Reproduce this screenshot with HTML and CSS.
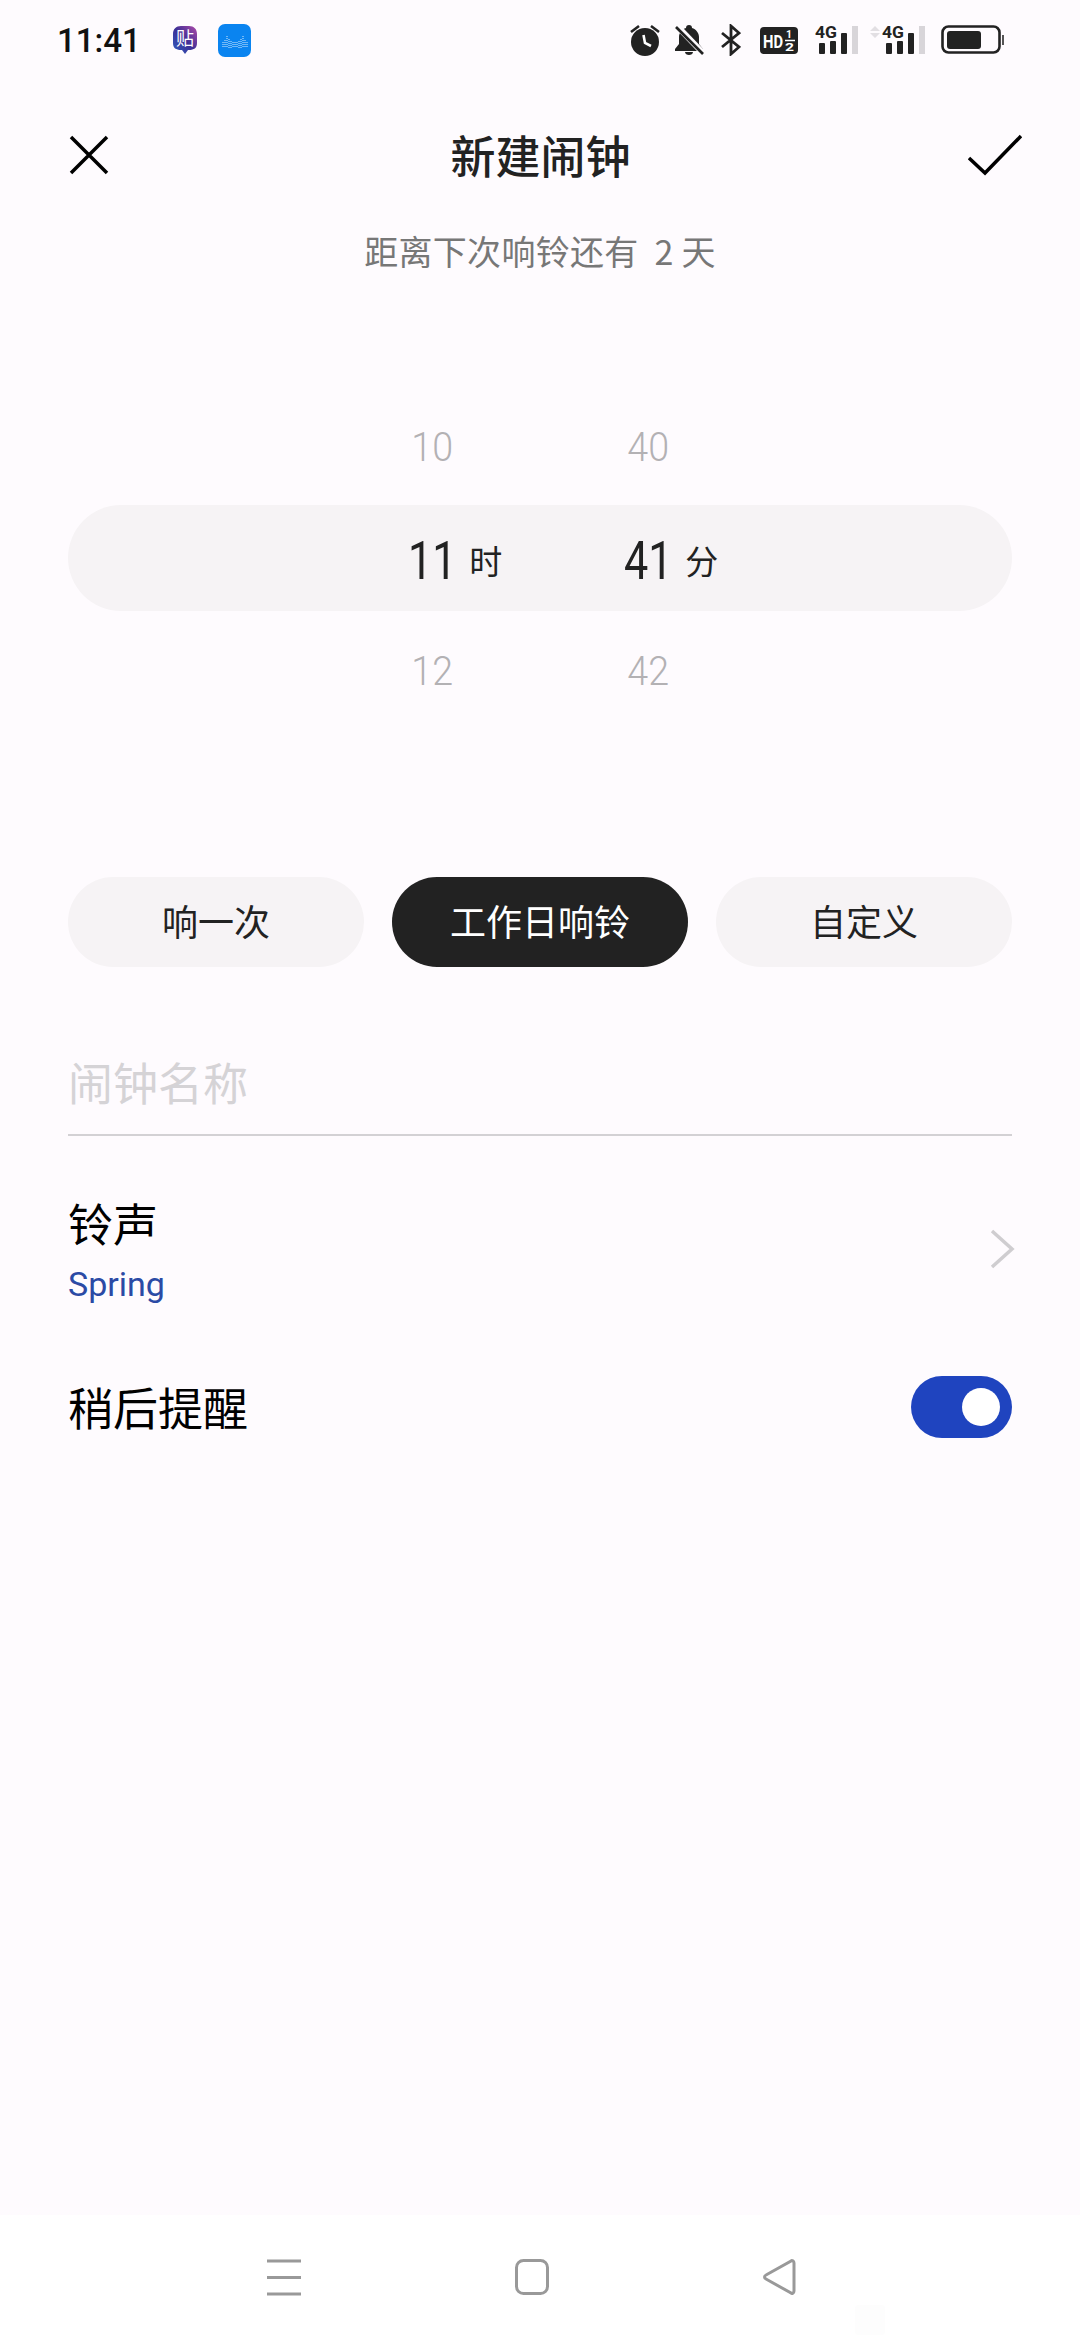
FILE: index.html
```html
<!DOCTYPE html>
<html lang="zh-CN">
<head>
<meta charset="utf-8">
<title>新建闹钟</title>
<link rel="stylesheet" href="styles.css">
</head>
<body>
<div class="app">
  <div class="status">
    <span class="time">11:41</span>
    <svg class="ic-tie" width="26" height="30" viewBox="0 0 26 30">
      <defs><linearGradient id="tg" x1="0" y1="1" x2="1" y2="0"><stop offset="0" stop-color="#2f5fc0"/><stop offset=".5" stop-color="#3c2f96"/><stop offset="1" stop-color="#b04aa8"/></linearGradient></defs>
      <path d="M9 1h8c5 0 8 3 8 8v9c0 5-3 7-8 7h-1l-3 4-3-4H9c-5 0-8-2-8-7V9c0-5 3-8 8-8z" fill="url(#tg)"/>
      <text x="13" y="20" class="tie-text" text-anchor="middle">贴</text>
    </svg>
    <svg class="ic-blue" width="33" height="33" viewBox="0 0 33 33">
      <rect width="33" height="33" rx="7" fill="#0a84f0"/>
      <path d="M5 18V24M7 16V24M9 12V24M11 15V24M13 17V24M15 18V24M17 18V24M19 18V24M21 17V24M23 15V24M25 12V24M27 16V24M29 18V24" stroke="#fff" stroke-width="1" stroke-dasharray="1 1" opacity=".85" fill="none"/>
    </svg>
    <div class="status-right">
      <svg class="si-alarm" width="30" height="32" viewBox="0 0 30 32"><circle cx="15" cy="18" r="14" fill="#222"/><path d="M1 8l8-6M29 8l-8-6" stroke="#222" stroke-width="2.6"/><path d="M13.500 11l1.500 8 6 3" stroke="#fff" stroke-width="2.6" fill="none"/></svg>
      <svg class="si-bell" width="29" height="32" viewBox="0 0 29 32"><path d="M14 1c2 0 3 1 3 3 4 1 7 5 7 9v7l4 5v2H0v-2l4-5v-7c0-4 3-8 7-9 0-2 1-3 3-3zM10 28h8c0 2-2 3-4 3s-4-1-4-3z" fill="#222"/><path d="M2 2l27 28" stroke="#fefbfe" stroke-width="6"/><path d="M1 3l27 27" stroke="#222" stroke-width="2.6"/></svg>
      <svg class="si-bt" width="20" height="32" viewBox="0 0 20 32"><path d="M1 9l17 14-8 7V2l8 7L1 23" stroke="#222" stroke-width="2.800" fill="none"/></svg>
      <svg class="si-hd" width="38" height="27" viewBox="0 0 38 27"><rect width="38" height="27" rx="4" fill="#222"/><text x="3" y="21" class="hd" textLength="20" lengthAdjust="spacingAndGlyphs">HD</text><text x="26" y="11" class="hd-s" textLength="6" lengthAdjust="spacingAndGlyphs">1</text><text x="25" y="24" class="hd-s" textLength="9" lengthAdjust="spacingAndGlyphs">2</text><path d="M25 13.500h10" stroke="#fff" stroke-width="1.500"/></svg>
      <svg class="si-sig" width="44" height="36" viewBox="0 -2 44 36"><text x="0" y="14" class="g4" textLength="22" lengthAdjust="spacingAndGlyphs">4G</text><rect x="4" y="19" width="6" height="11" rx="1" fill="#222"/><rect x="15" y="17" width="6" height="13" rx="1" fill="#222"/><rect x="26" y="9" width="6" height="21" rx="1" fill="#222"/><rect x="37" y="2" width="6" height="28" fill="#d8d5d9"/></svg>
      <svg class="si-sig2" width="58" height="36" viewBox="0 -2 58 36"><path d="M2 7l5-5 5 5zM2 9l5 5 5-5z" fill="#e2dfe3"/><text x="14" y="14" class="g4" textLength="22" lengthAdjust="spacingAndGlyphs">4G</text><rect x="18" y="19" width="6" height="11" rx="1" fill="#222"/><rect x="29" y="17" width="6" height="13" rx="1" fill="#222"/><rect x="40" y="9" width="6" height="21" rx="1" fill="#222"/><rect x="51" y="2" width="6" height="28" fill="#d8d5d9"/></svg>
      <svg class="si-batt" width="64" height="30" viewBox="0 0 64 30"><rect x="1.500" y="1.500" width="57" height="26" rx="6" fill="none" stroke="#222" stroke-width="2.6"/><rect x="6" y="6" width="34" height="18" rx="3" fill="#222"/><rect x="61" y="10" width="2" height="10" fill="#555"/></svg>
    </div>
  </div>

  <div class="header">
    <svg width="40" height="40" viewBox="0 0 40 40"><path d="M2 2l36 36M38 2L2 38" stroke="#000" stroke-width="3.500" fill="none"/></svg>
    <h1 class="title">新建闹钟</h1>
    <svg width="54" height="42" viewBox="0 0 54 42"><path d="M1 24l16 15L53 2" stroke="#000" stroke-width="3.500" fill="none"/></svg>
  </div>
  <p class="sub">距离下次响铃还有&nbsp;&nbsp;2 天</p>

  <div class="wheel">
    <div class="wheel-row dim">
      <div class="cell"><span class="num">10</span></div>
      <div class="cell"><span class="num">40</span></div>
    </div>
    <div class="wheel-row active">
      <div class="cell"><span class="num">11</span><span class="unit">时</span></div>
      <div class="cell"><span class="num">41</span><span class="unit">分</span></div>
    </div>
    <div class="wheel-row dim">
      <div class="cell"><span class="num">12</span></div>
      <div class="cell"><span class="num">42</span></div>
    </div>
  </div>

  <div class="segments">
    <div class="seg">响一次</div>
    <div class="seg on">工作日响铃</div>
    <div class="seg">自定义</div>
  </div>

  <div class="name-field">闹钟名称</div>

  <div class="row ring">
    <div>
      <div class="row-title">铃声</div>
      <div class="row-sub">Spring</div>
    </div>
    <svg class="chev" width="26" height="40" viewBox="0 0 26 40"><path d="M3 2l20 18L3 38" stroke="#cfcdd0" stroke-width="3.500" fill="none"/></svg>
  </div>

  <div class="row snooze">
    <div class="row-title">稍后提醒</div>
    <div class="toggle"><span class="knob"></span></div>
  </div>

  <div class="nav">
    <svg width="34" height="37" viewBox="0 0 34 37"><path d="M0 2h34M0 18.500h34M0 35h34" stroke="#999" stroke-width="3"/></svg>
    <svg width="34" height="36" viewBox="0 0 34 36"><rect x="1.500" y="1.500" width="31" height="33" rx="7" fill="none" stroke="#999" stroke-width="3"/></svg>
    <svg width="34" height="36" viewBox="0 0 34 36"><path d="M31 4c0-2-2-3-3-2L3 16c-2 1-2 3 0 4l25 14c1 1 3 0 3-2z" fill="none" stroke="#999" stroke-width="3"/></svg>
    <span class="ghost"></span>
  </div>
</div>
</body>
</html>
```
FILE: styles.css
```css
* { box-sizing: border-box; }
html, body { margin: 0; padding: 0; }
body {
  background: #fefbfe;
  font-family: "Noto Sans CJK SC", Roboto, sans-serif;
  color: #222;
}
.app { width: 1080px; height: 2340px; display: flex; flex-direction: column; overflow: hidden; }

.status { height: 80px; display: flex; align-items: center; padding: 0 75px 0 57px; }
.time { font: 500 33px/1 Roboto, sans-serif; color: #111; width: 80px; white-space: nowrap; }
.ic-tie { margin-left: 35px; }
.ic-blue { margin-left: 20px; }
.tie-text { font: 400 18px "Noto Sans CJK SC", sans-serif; fill: #fff; }
.status-right { margin-left: auto; display: flex; align-items: center; }
.si-bell { margin-left: 15px; }
.si-bt { margin-left: 17px; }
.si-hd { margin-left: 19px; }
.si-sig { margin-left: 17px; }
.si-sig2 { margin-left: 9px; }
.si-batt { margin-left: 15px; }
.hd { font: 700 19px Roboto, sans-serif; fill: #fff; }
.hd-s { font: 700 10px Roboto, sans-serif; fill: #fff; }
.g4 { font: 700 17px Roboto, sans-serif; fill: #222; }

.header { height: 74px; margin-top: 38px; padding: 0 58px 0 69px; display: flex; align-items: center; justify-content: space-between; }
.title { margin: 0 0 0 4px; font-size: 45px; font-weight: 500; line-height: 74px; color: #222; }
.sub { margin: 34px 0 0; text-align: center; font-size: 34px; letter-spacing: .3px; line-height: 50px; color: #777; }

.wheel { margin: 117px 68px 0; display: flex; flex-direction: column; gap: 6px; }
.wheel-row { height: 106px; padding-left: 256px; display: grid; grid-template-columns: 216px 216px; align-items: center; }
.wheel-row.active { background: #f6f3f5; border-radius: 53px; }
.cell { display: grid; grid-template-columns: 1fr auto 1fr; align-items: center; }
.num { grid-column: 2; font-family: Roboto, sans-serif; font-weight: 300; line-height: 1; }
.dim .num { font-size: 40px; color: #b3b1b4; padding-top: 4px; transform: scaleX(.94); }
.active .num { font-size: 54px; font-weight: 400; color: #222; padding-top: 5px; transform: scaleX(.8); }
.unit { grid-column: 3; font-size: 33px; line-height: 1; padding-left: 7px; padding-top: 5px; color: #222; }

.segments { margin: 154px 68px 0; display: flex; gap: 28px; }
.seg { flex: 1; height: 90px; padding-bottom: 4px; border-radius: 45px; background: #f6f3f5; display: flex; align-items: center; justify-content: center; font-size: 36px; color: #222; }
.seg.on { background: #222; color: #fff; }

.name-field { margin: 66px 68px 0; height: 103px; border-bottom: 2px solid #d3d1d4; font-size: 45px; line-height: 70px; padding-top: 14px; color: #d5d3d6; }

.row { margin: 0 68px; display: flex; align-items: center; justify-content: space-between; }
.ring { margin-top: 55px; }
.row-title { font-size: 45px; line-height: 64px; color: #000; }
.row-sub { font: 400 34px/44px Roboto, sans-serif; color: #2b4aa5; margin-top: 7px; }
.chev { margin-right: -3px; }
.snooze { margin-top: 69px; }
.toggle { width: 101px; height: 62px; border-radius: 31px; background: #1f44bf; display: flex; align-items: center; justify-content: flex-end; padding-right: 12px; }
.knob { width: 38px; height: 38px; border-radius: 50%; background: #fff; }

.nav { position: relative; margin-top: auto; height: 125px; background: #fff; display: flex; align-items: flex-start; padding: 44px 0 0 267px; gap: 214px; }
.ghost { position: absolute; left: 855px; top: 90px; width: 30px; height: 30px; background: #fdfdfd; border-radius: 3px; }
```
